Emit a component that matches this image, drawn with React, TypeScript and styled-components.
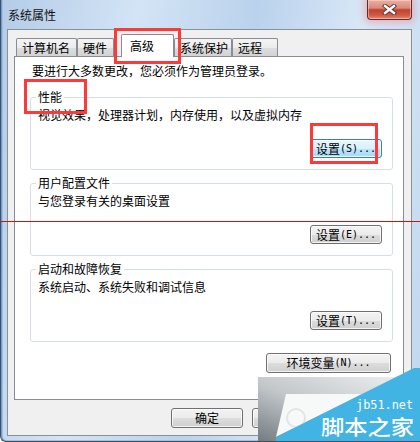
import React from "react";
import styled, { createGlobalStyle } from "styled-components";

const FONT = `"Noto Sans CJK SC", "Noto Sans", sans-serif`;

const Global = createGlobalStyle`
  html, body { margin: 0; padding: 0; background: #fff; }
  body { font-family: ${FONT}; font-size: 12px; }
  * { box-sizing: border-box; }
`;

const Window = styled.div`
  position: relative;
  width: 420px;
  height: 442px;
  display: flex;
  flex-direction: column;
  padding: 0 8px 5px 6px;
  border-left: 1px solid #45505c;
  border-bottom: 1px solid #45505c;
  border-bottom-left-radius: 6px;
  background: linear-gradient(100deg, #b4cce8 0%, #d3e4f5 28%, #bad2ec 52%, #d9e8f7 74%, #c0d7ef 100%);
  box-shadow: inset 1px 0 0 #6f9dd3, inset 2px 0 0 #9cbfe4, inset 0 -1px 0 #9cbfe4;
  overflow: hidden;
`;

const TitleBar = styled.div`
  height: 29px;
  flex: none;
  display: flex;
  align-items: flex-start;
`;

const Title = styled.div`
  margin-top: 7px;
  padding-left: 1px;
  font-size: 12px;
  line-height: 15px;
  color: #111;
`;

const CloseButton = styled.div`
  margin-left: auto;
  width: 45px;
  height: 20px;
  border: 1px solid #5d2b28;
  border-top: none;
  border-radius: 0 0 4px 4px;
  background: linear-gradient(#eab0a4 0%, #d98a7b 42%, #c2412f 52%, #cf5a45 80%, #e08a72 100%);
  box-shadow: 0 0 7px 3px rgba(232, 150, 160, 0.6), inset 0 0 0 1px rgba(255, 220, 210, 0.5);
  display: flex;
  align-items: center;
  justify-content: center;
`;

const Client = styled.div`
  flex: 1;
  border: 1px solid #8b9097;
  background: #f0f0f0;
  display: flex;
  flex-direction: column;
  padding-top: 4px;
`;

const TabStrip = styled.div`
  height: 22px;
  flex: none;
  display: flex;
  align-items: flex-end;
  padding-left: 8px;
`;

const Tab = styled.div<{ $w: number; $ml?: number; $sel?: boolean; $pl?: number }>`
  width: ${(p) => p.$w}px;
  margin-left: ${(p) => p.$ml ?? 0}px;
  height: ${(p) => (p.$sel ? 23 : 18)}px;
  margin-bottom: ${(p) => (p.$sel ? -1 : 0)}px;
  position: relative;
  z-index: ${(p) => (p.$sel ? 1 : 0)};
  border: 1px solid #898c95;
  border-bottom: none;
  border-radius: 2px 2px 0 0;
  background: ${(p) =>
    p.$sel ? "#fff" : "linear-gradient(#f4f4f4 0%, #ececec 50%, #dedede 50%, #d3d3d3 100%)"};
  padding-left: ${(p) => p.$pl ?? 5}px;
  padding-top: ${(p) => (p.$sel ? 3 : 1)}px;
  font-size: 12px;
  line-height: 15px;
  color: #000;
  white-space: nowrap;
`;

const Panel = styled.div`
  margin-left: 6px;
  width: 390px;
  height: 344px;
  flex: none;
  border: 1px solid #898c95;
  background: #fff;
  display: flex;
  flex-direction: column;
`;

const Notice = styled.div`
  padding: 7px 0 0 17px;
  line-height: 14px;
  color: #000;
`;

const Groups = styled.div`
  margin: 12px 0 0 15px;
  width: 363px;
  display: flex;
  flex-direction: column;
  gap: 6px;
`;

const Group = styled.fieldset`
  margin: 0;
  height: 80px;
  border: 1px solid #d5dfe5;
  border-radius: 3px;
  padding: 4px 10px 0 7px;
  min-width: 0;
`;

const Legend = styled.legend`
  padding: 0 2px;
  margin-left: -2px;
  line-height: 14px;
  color: #000;
`;

const Desc = styled.div`
  line-height: 14px;
  height: 14px;
  color: #000;
`;

const Btn = styled.div<{ $w: number; $h: number; $focus?: boolean }>`
  width: ${(p) => p.$w}px;
  height: ${(p) => p.$h}px;
  flex: none;
  border: 1px solid ${(p) => (p.$focus ? "#3c7fb1" : "#707070")};
  border-radius: 3px;
  background: ${(p) =>
    p.$focus
      ? "linear-gradient(#eaf6fd 0%, #d9f0fc 50%, #bee6fd 50%, #a7d9f5 100%)"
      : "linear-gradient(#f3f3f3 0%, #ebebeb 50%, #dddddd 50%, #cfcfcf 100%)"};
  box-shadow: inset 0 0 0 1px rgba(255, 255, 255, 0.75);
  display: flex;
  align-items: center;
  justify-content: center;
  font-size: 12px;
  line-height: 14px;
  color: #000;
  white-space: nowrap;
`;

const GroupBtn = styled(Btn)`
  margin: 17px 0 0 auto;
`;

const EnvBtn = styled(Btn)`
  margin: 11px 12px 0 0;
  align-self: flex-end;
`;

const Asc = styled.span`
  font-family: "DejaVu Sans Mono", "Liberation Mono", monospace;
  font-size: 10px;
  letter-spacing: 0;
`;

const BottomRow = styled.div`
  margin-top: 8px;
  display: flex;
  justify-content: flex-end;
  gap: 9px;
  padding-right: 6px;
`;

const Annot = styled.div<{ $x: number; $y: number; $w: number; $h: number }>`
  position: absolute;
  left: ${(p) => p.$x}px;
  top: ${(p) => p.$y}px;
  width: ${(p) => p.$w}px;
  height: ${(p) => p.$h}px;
  border: 3px solid #fb3a3a;
  pointer-events: none;
  z-index: 5;
`;

const RuleLine = styled.div`
  position: absolute;
  left: 0;
  top: 221px;
  width: 420px;
  height: 1px;
  background: #cf1010;
  z-index: 5;
`;

const Watermark = styled.svg`
  position: absolute;
  left: 257px;
  top: 368px;
  z-index: 6;
`;

function CloseX() {
  return (
    <svg width="15" height="11" viewBox="0 0 15 11">
      <path d="M3 2 L12 9 M12 2 L3 9" stroke="#5a3030" strokeWidth="4.2" strokeLinecap="square" fill="none" />
      <path d="M3 2 L12 9 M12 2 L3 9" stroke="#ffffff" strokeWidth="2.4" strokeLinecap="square" fill="none" />
    </svg>
  );
}

export default function App() {
  return (
    <>
      <Global />
      <Window>
        <TitleBar>
          <Title>系统属性</Title>
          <CloseButton>
            <CloseX />
          </CloseButton>
        </TitleBar>
        <Client>
          <TabStrip>
            <Tab $w={61}>计算机名</Tab>
            <Tab $w={37}>硬件</Tab>
            <Tab $w={53} $ml={7} $sel $pl={8}>高级</Tab>
            <Tab $w={58}>系统保护</Tab>
            <Tab $w={46}>远程</Tab>
          </TabStrip>
          <Panel>
            <Notice>要进行大多数更改，您必须作为管理员登录。</Notice>
            <Groups>
              <Group>
                <Legend>性能</Legend>
                <Desc>视觉效果，处理器计划，内存使用，以及虚拟内存</Desc>
                <GroupBtn $w={72} $h={19} $focus>
                  设置<Asc>(S)...</Asc>
                </GroupBtn>
              </Group>
              <Group>
                <Legend>用户配置文件</Legend>
                <Desc>与您登录有关的桌面设置</Desc>
                <GroupBtn $w={72} $h={19}>
                  设置<Asc>(E)...</Asc>
                </GroupBtn>
              </Group>
              <Group>
                <Legend>启动和故障恢复</Legend>
                <Desc>系统启动、系统失败和调试信息</Desc>
                <GroupBtn $w={72} $h={19}>
                  设置<Asc>(T)...</Asc>
                </GroupBtn>
              </Group>
            </Groups>
            <EnvBtn $w={125} $h={20}>
              环境变量<Asc>(N)...</Asc>
            </EnvBtn>
          </Panel>
          <BottomRow>
            <Btn $w={72} $h={20}>确定</Btn>
            <Btn $w={72} $h={20} aria-label="取消" />
            <Btn $w={72} $h={20} aria-label="应用" />
          </BottomRow>
        </Client>

        <Annot $x={113} $y={28} $w={67} $h={36} />
        <Annot $x={23} $y={79} $w={63} $h={35} />
        <Annot $x={309} $y={123} $w={68} $h={41} />
        <RuleLine />

        <Watermark width="163" height="74" viewBox="0 0 163 74">
          <defs>
            <linearGradient id="wmg" x1="0" y1="1" x2="1" y2="0">
              <stop offset="0" stopColor="#737b80" />
              <stop offset="0.45" stopColor="#c2c7ca" />
              <stop offset="1" stopColor="#f2f3f3" />
            </linearGradient>
          </defs>
          <rect x="0" y="9" width="163" height="65" fill="url(#wmg)" />
          <polygon points="28,26 104,26 18,69" fill="#f7f8f8" />
          <circle cx="38" cy="50" r="9" fill="none" stroke="#e2e5e6" strokeWidth="2" />
          <polygon points="156,0 163,0 163,74 18,74 18,69" fill="#42b4e4" />
          <text x="98" y="41" fill="#ffffff" fontFamily="'DejaVu Sans Mono', monospace" fontSize="12" textLength="57" lengthAdjust="spacingAndGlyphs">jb51.net</text>
          <text x="63" y="67" fill="#ffffff" fontFamily="'Noto Sans CJK SC', sans-serif" fontSize="20" fontWeight="500" textLength="93" lengthAdjust="spacingAndGlyphs">脚本之家</text>
        </Watermark>
      </Window>
    </>
  );
}
